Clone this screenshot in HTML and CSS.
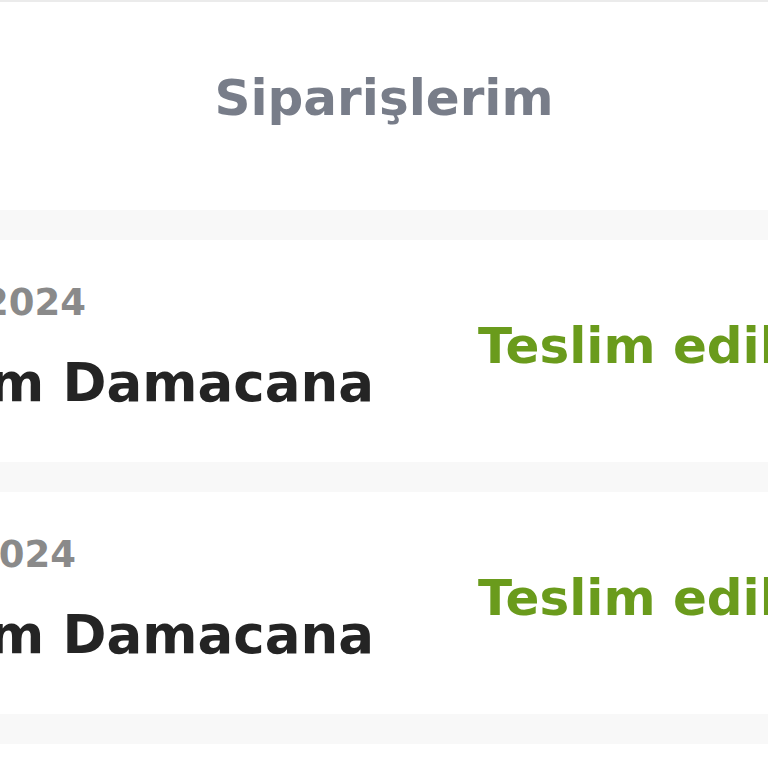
FILE: index.html
```html
<!DOCTYPE html>
<html lang="tr">
<head>
<meta charset="utf-8">
<title>Siparişlerim</title>
<link rel="stylesheet" href="styles.css">
</head>
<body>
  <header class="header">
    <h1 class="title">Siparişlerim</h1>
  </header>
  <main class="orders">
    <article class="card">
      <div class="info">
        <div class="date date--first">12.03.2024</div>
        <div class="product">Premium Damacana</div>
      </div>
      <div class="status">Teslim edildi</div>
    </article>
    <article class="card">
      <div class="info">
        <div class="date date--second">05.02.2024</div>
        <div class="product">Premium Damacana</div>
      </div>
      <div class="status">Teslim edildi</div>
    </article>
  </main>
</body>
</html>
```
FILE: styles.css
```css
html, body {
  margin: 0;
  padding: 0;
  background: #ffffff;
  overflow: hidden;
  width: 768px;
  height: 768px;
}

body {
  font-family: "DejaVu Sans", "Liberation Sans", sans-serif;
  font-weight: 700;
}

.header {
  border-top: 2px solid #ebebeb;
  height: 210px;
  box-sizing: border-box;
  padding-top: 71px;
  display: flex;
  justify-content: center;
}

.title {
  margin: 0;
  font-size: 50px;
  line-height: 1;
  font-weight: 700;
  color: #787d89;
  white-space: nowrap;
}

.orders {
  background: #f8f8f8;
  padding: 30px 0;
  display: flex;
  flex-direction: column;
  gap: 30px;
}

.card {
  background: #ffffff;
  height: 222px;
  display: flex;
  overflow: hidden;
}

.info {
  width: 374px;
  flex: none;
  display: flex;
  flex-direction: column;
  align-items: flex-end;
  padding-top: 44px;
}

.date {
  font-size: 37px;
  line-height: 1;
  color: #8a8a8a;
  white-space: nowrap;
}

.date--first {
  margin-right: 288px;
}

.date--second {
  margin-right: 298px;
}

.product {
  margin-top: 35px;
  font-size: 53px;
  line-height: 1;
  color: #242424;
  white-space: nowrap;
}

.status {
  margin-left: 104px;
  padding-top: 81px;
  font-size: 50px;
  line-height: 1;
  color: #6a9b1c;
  white-space: nowrap;
}
```
